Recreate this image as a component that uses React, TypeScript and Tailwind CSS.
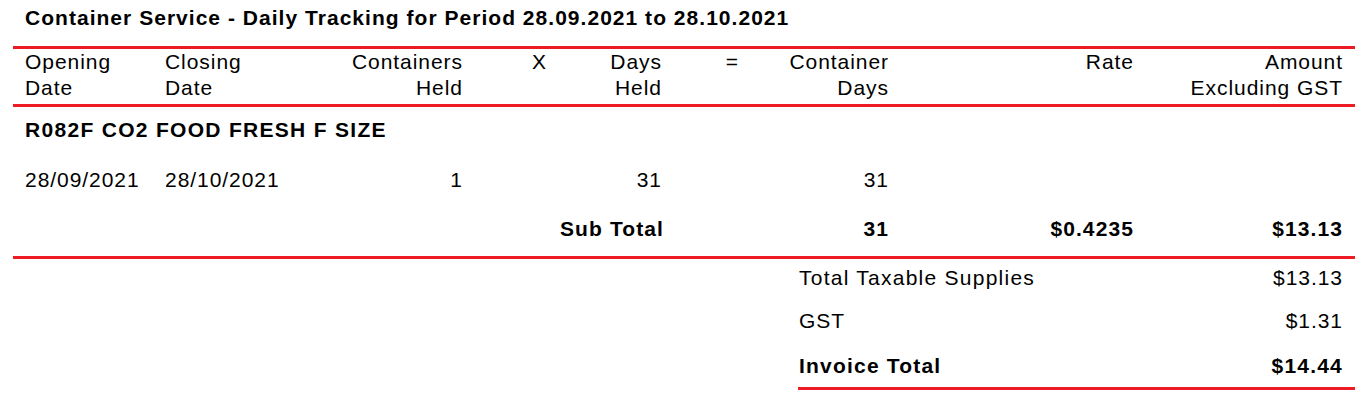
import React from "react";

const cols =
  "grid grid-cols-[140px_147px_163px_97px_102px_98px_129px_245px_221px]";

function Cell({
  children,
  className = "",
}: {
  children?: React.ReactNode;
  className?: string;
}) {
  return <div className={"whitespace-nowrap " + className}>{children}</div>;
}

export default function App() {
  return (
    <div
      className="w-[1372px] h-[399px] bg-white text-black pl-[13px] pr-[17px] text-[21px] tracking-[0.95px] overflow-hidden"
      style={{ fontFamily: '"Liberation Sans", Arial, sans-serif' }}
    >
      <div className="pt-[6px] pl-[12px] leading-[24px] font-bold tracking-[1.03px]">
        Container Service - Daily Tracking for Period 28.09.2021 to 28.10.2021
      </div>

      <div
        className={
          cols +
          " mt-[16px] border-y-[3px] border-[#ed1c24] leading-[26px] pb-[3px]"
        }
      >
        <Cell className="pl-[12px]">
          Opening
          <br />
          Date
        </Cell>
        <Cell className="pl-[12px]">
          Closing
          <br />
          Date
        </Cell>
        <Cell className="text-right">
          Containers
          <br />
          Held
        </Cell>
        <Cell className="text-right pr-[13px]">X</Cell>
        <Cell className="text-right">
          Days
          <br />
          Held
        </Cell>
        <Cell className="text-right pr-[21px]">=</Cell>
        <Cell className="text-right">
          Container
          <br />
          Days
        </Cell>
        <Cell className="text-right">Rate</Cell>
        <Cell className="text-right pr-[12px]">
          Amount
          <br />
          Excluding GST
        </Cell>
      </div>

      <div className="border-b-[3px] border-[#ed1c24] pb-[14px] leading-[26px]">
        <div className="pt-[10px] pl-[12px] font-bold tracking-[1.3px]">
          R082F CO2 FOOD FRESH F SIZE
        </div>
        <div className={cols + " mt-[24px]"}>
          <Cell className="pl-[12px]">28/09/2021</Cell>
          <Cell className="pl-[12px]">28/10/2021</Cell>
          <Cell className="text-right">1</Cell>
          <Cell />
          <Cell className="text-right">31</Cell>
          <Cell />
          <Cell className="text-right">31</Cell>
          <Cell />
          <Cell />
        </div>
        <div className={cols + " mt-[23px] font-bold tracking-[1.1px]"}>
          <Cell />
          <Cell />
          <Cell />
          <Cell />
          <Cell className="text-right">Sub Total</Cell>
          <Cell />
          <Cell className="text-right">31</Cell>
          <Cell className="text-right">$0.4235</Cell>
          <Cell className="text-right pr-[12px]">$13.13</Cell>
        </div>
      </div>

      <div className="ml-[785px] border-b-[3px] border-[#ed1c24] pb-[8px] leading-[26px]">
        <div className="flex justify-between pt-[6px] pl-[1px] pr-[12px]">
          <span className="tracking-[1.25px]">Total Taxable Supplies</span>
          <span>$13.13</span>
        </div>
        <div className="flex justify-between mt-[17px] pl-[1px] pr-[12px]">
          <span>GST</span>
          <span>$1.31</span>
        </div>
        <div className="flex justify-between mt-[19px] pl-[1px] pr-[12px] font-bold tracking-[1.2px]">
          <span>Invoice Total</span>
          <span>$14.44</span>
        </div>
      </div>
    </div>
  );
}
